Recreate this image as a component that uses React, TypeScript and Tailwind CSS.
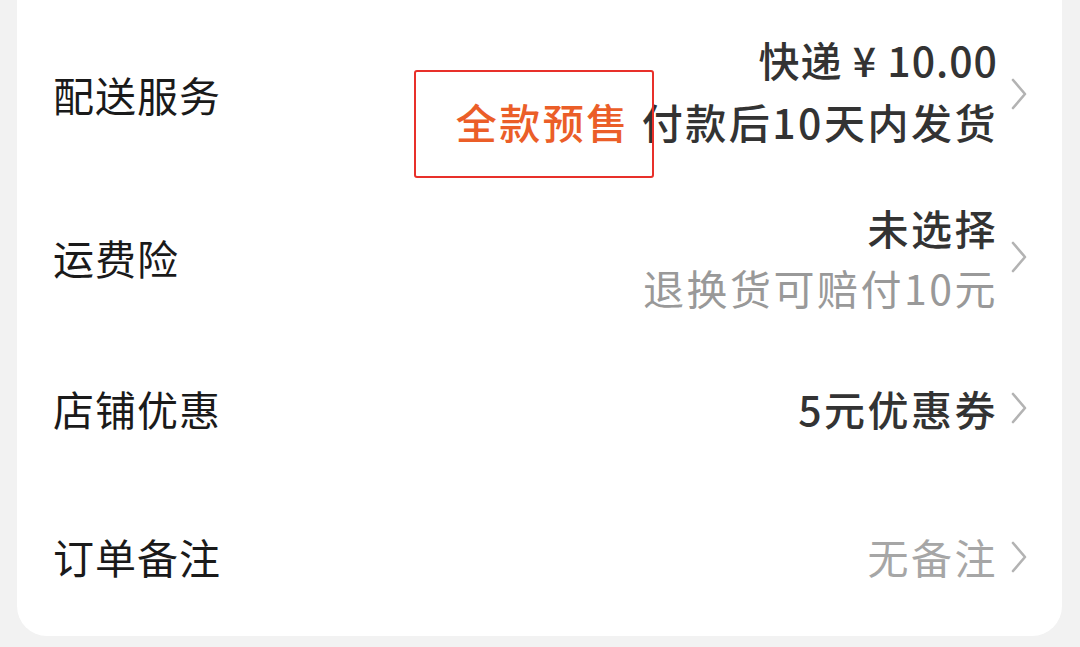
import type { ReactNode } from "react";

function Chevron() {
  return (
    <svg width="18" height="32" viewBox="0 0 18 32" className="shrink-0" aria-hidden>
      <polyline
        points="3,2 15,16 3,30"
        fill="none"
        stroke="#b3b3b3"
        strokeWidth="2.6"
        strokeLinecap="round"
        strokeLinejoin="round"
      />
    </svg>
  );
}

type RowProps = {
  label: string;
  className: string;
  valueClassName?: string;
  children: ReactNode;
};

function Row({ label, className, valueClassName = "", children }: RowProps) {
  return (
    <div className={`flex items-center pl-[36px] pr-[34px] ${className}`}>
      <div className="flex-1 text-[41px] leading-none tracking-[1px] text-[#1a1a1a]">{label}</div>
      <div className="flex items-center gap-[12px]">
        <div className={`flex flex-col items-end tracking-[2.5px] ${valueClassName}`}>
          {children}
        </div>
        <Chevron />
      </div>
    </div>
  );
}

export default function App() {
  return (
    <div
      className="h-[647px] w-[1080px] overflow-hidden bg-[#f2f2f2]"
      style={{ fontFamily: '"Noto Sans CJK SC", "Noto Sans", sans-serif' }}
    >
      <div className="relative ml-[17px] w-[1045px] rounded-b-[30px] bg-white">
        <Row label="配送服务" className="h-[183px] pt-[5px]" valueClassName="pb-[8px]">
          <div className="text-[41px] font-medium leading-[62px] tracking-[1px] text-[#333]">
            快递 ¥ 10.00
          </div>
          <div className="text-[41px] font-medium leading-[62px] text-[#333]">
            <span className="mr-[12px] text-[#eb5e28]">全款预售</span>
            付款后10天内发货
          </div>
        </Row>
        <Row label="运费险" className="h-[148px]">
          <div className="text-[41px] font-medium leading-[60px] text-[#333]">未选择</div>
          <div className="text-[41px] leading-[60px] text-[#999]">退换货可赔付10元</div>
        </Row>
        <Row label="店铺优惠" className="h-[154px]">
          <div className="text-[41px] font-medium leading-none text-[#333]">5元优惠券</div>
        </Row>
        <Row label="订单备注" className="h-[151px] pb-[8px]">
          <div className="text-[41px] leading-none text-[#a6a6a6]">无备注</div>
        </Row>
        <div className="absolute left-[397px] top-[70px] h-[108px] w-[240px] rounded-[3px] border-2 border-[#e8302a]" />
      </div>
    </div>
  );
}
